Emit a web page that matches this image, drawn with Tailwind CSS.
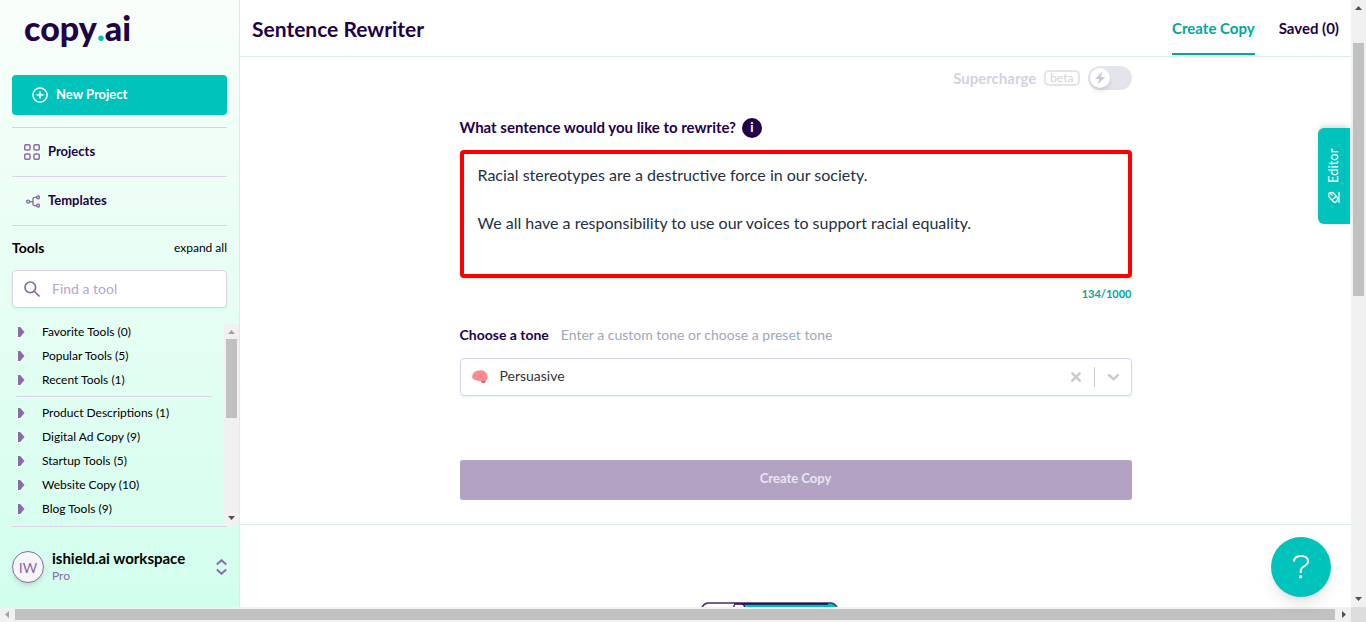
<!DOCTYPE html>
<html lang="en">
<head>
<meta charset="utf-8">
<title>Sentence Rewriter - copy.ai</title>
<script src="https://cdn.jsdelivr.net/npm/@tailwindcss/browser@4"></script>
</head>
<body class="flex h-screen flex-col overflow-hidden bg-white font-['Lato',sans-serif] text-[#220247]">
<svg class="hidden">
  <symbol id="tri" viewBox="0 0 7 10"><path d="M0 0h2.2l4.3 5-4.3 5H0z" fill="#8a6ba5"/></symbol>
</svg>

<div class="flex min-h-0 flex-1">
  <aside class="flex w-60 shrink-0 flex-col border-r border-[#d8eee4] bg-linear-to-b from-[#f9fefa] to-[#d2feee]">
    <a href="#" class="flex h-[75px] pt-2 pl-6 text-[34px] leading-10 font-black text-[#220247]">copy<span class="text-[#00c4bc]">.</span>ai</a>
    <div class="px-3">
      <button class="flex h-10 w-full items-center gap-2 rounded bg-[#00c4bc] pl-5 text-[13px] font-bold text-white">
        <svg class="size-4" viewBox="0 0 16 16" fill="none" stroke="currentColor" stroke-width="1.5"><circle cx="8" cy="8" r="7.1"/><path d="M8 4.4v7.2M4.4 8h7.2"/></svg>
        New Project
      </button>
      <nav class="mt-3 border-y border-[#ddd0e9] text-[13px] font-bold">
        <a href="#" class="flex h-12 items-center gap-2 pl-3">
          <svg class="size-4" viewBox="0 0 16 16" fill="none" stroke="#8a6ba5" stroke-width="1.5"><rect x=".7" y=".7" width="5.4" height="5.4" rx="1.6"/><rect x="9.9" y=".7" width="5.4" height="5.4" rx="1.6"/><rect x=".7" y="9.9" width="5.4" height="5.4" rx="1.6"/><rect x="9.9" y="9.9" width="5.4" height="5.4" rx="1.6"/></svg>
          Projects
        </a>
        <a href="#" class="flex h-[49px] items-center gap-2 border-t border-[#ddd0e9] pl-3">
          <svg class="size-4" viewBox="0 0 16 16" fill="none" stroke="#8a6ba5" stroke-width="1.4"><circle cx="4.200" cy="8.600" r="1.500"/><circle cx="14" cy="4.400" r="1.400"/><circle cx="14" cy="12.600" r="1.400"/><path d="M5.700 8.600H9M12.600 4.400h-2Q9 4.400 9 6v5q0 1.600 1.500 1.600h2.100"/></svg>
          Templates
        </a>
      </nav>
      <div class="flex h-11 items-center justify-between text-black">
        <h2 class="pb-0.5 text-[14px] font-bold">Tools</h2>
        <button class="text-[12px]">expand all</button>
      </div>
      <label class="flex h-[38px] items-center gap-3 rounded border border-[#ddd0e9] bg-white pl-[11px] shadow-sm shadow-[#00c4bc]/10">
        <svg class="size-4 shrink-0" viewBox="0 0 16 16" fill="none" stroke="#8a6ba5" stroke-width="1.7"><circle cx="6.3" cy="6.3" r="5.3"/><path d="m10 10 5.5 5.5"/></svg>
        <input type="text" aria-label="Find a tool" placeholder="Find a tool" class="w-full min-w-0 bg-transparent pb-0.5 text-[14px] outline-none placeholder:text-[#b9a6ca]">
      </label>
    </div>
    <div class="mt-4 flex min-h-0 flex-1 justify-between overflow-hidden">
      <div class="ml-4 flex w-[196px] flex-col gap-2 text-[12px] leading-4 text-black">
        <button class="flex items-center gap-[17px] pl-0.5"><svg class="h-2.5 w-[7px]"><use href="#tri"/></svg>Favorite Tools (0)</button>
        <button class="flex items-center gap-[17px] pl-0.5"><svg class="h-2.5 w-[7px]"><use href="#tri"/></svg>Popular Tools (5)</button>
        <button class="flex items-center gap-[17px] pl-0.5"><svg class="h-2.5 w-[7px]"><use href="#tri"/></svg>Recent Tools (1)</button>
        <hr class="border-[#ddd0e9]">
        <button class="flex items-center gap-[17px] pl-0.5"><svg class="h-2.5 w-[7px]"><use href="#tri"/></svg>Product Descriptions (1)</button>
        <button class="flex items-center gap-[17px] pl-0.5"><svg class="h-2.5 w-[7px]"><use href="#tri"/></svg>Digital Ad Copy (9)</button>
        <button class="flex items-center gap-[17px] pl-0.5"><svg class="h-2.5 w-[7px]"><use href="#tri"/></svg>Startup Tools (5)</button>
        <button class="flex items-center gap-[17px] pl-0.5"><svg class="h-2.5 w-[7px]"><use href="#tri"/></svg>Website Copy (10)</button>
        <button class="flex items-center gap-[17px] pl-0.5"><svg class="h-2.5 w-[7px]"><use href="#tri"/></svg>Blog Tools (9)</button>
      </div>
      <div class="flex w-[15px] flex-col items-center bg-[#f1f1f1]">
        <svg class="h-[15px] w-[15px]" viewBox="0 0 15 15"><path d="M4 10h7L7.500 6z" fill="#a3a3a3"/></svg>
        <div class="h-[79px] w-[11px] bg-[#c1c1c1]"></div>
        <svg class="mt-auto h-[15px] w-[15px]" viewBox="0 0 15 15"><path d="M4 5h7l-3.500 4z" fill="#505050"/></svg>
      </div>
    </div>
    <button class="mx-3 flex h-[81px] items-center gap-2 border-t border-[#ddd0e9] text-left">
      <span class="flex size-8 items-center justify-center rounded-full border border-[#8a6ba5] bg-[#f6f5f8] text-[14px] text-[#8a6ba5] shadow-md">IW</span>
      <span class="flex-1 pb-0.5"><span class="block text-[15px] leading-5 font-bold text-black">ishield.ai workspace</span><span class="block text-[12px] leading-4 text-[#8a6ba5]">Pro</span></span>
      <svg class="h-4 w-[11px]" viewBox="0 0 11 16" fill="none" stroke="#8a6ba5" stroke-width="1.900"><path d="M.8 5.500 5.500 1.200l4.700 4.300M.8 10.500l4.700 4.300 4.700-4.300"/></svg>
    </button>
  </aside>

  <div class="relative flex min-w-0 flex-1 flex-col">
    <header class="flex h-[57px] shrink-0 items-center justify-between border-b border-[#d8eee0] px-3">
      <h1 class="pt-0.5 text-[21px] font-bold">Sentence Rewriter</h1>
      <nav class="flex items-center gap-6 text-[15px] font-bold">
        <a href="#" class="mt-0.5 flex h-[51px] items-center border-b-2 border-[#00a79d] text-[#00a79d]">Create Copy</a>
        <a href="#">Saved (0)</a>
      </nav>
    </header>
    <main class="min-h-0 flex-1 overflow-hidden">
      <section class="h-[468px] border-b border-[#d8eee0] pt-[9px]">
        <div class="mx-auto max-w-2xl">
          <label class="flex h-6 items-center justify-end gap-2 text-[15px] font-bold text-[#d2d3db]">
            Supercharge
            <span class="flex h-4 items-center rounded-[5px] border-2 border-[#e4e4eb] px-1 text-[12px] font-normal">beta</span>
            <span class="relative flex">
              <input type="checkbox" class="h-6 w-11 appearance-none rounded-full bg-[#e4e4eb]">
              <span class="absolute top-0.5 left-0.5 flex size-5 items-center justify-center rounded-full bg-white shadow-md"><svg class="h-3.5 w-3" viewBox="0 0 12 14"><path d="M8.500.5 1 8h4.200L3.400 13.500 11.300 6H7z" fill="#c9c9ce"/></svg></span>
            </span>
          </label>
          <div class="mt-7 flex h-5 items-center gap-1.5">
            <label for="sentence" class="pb-0.5 text-[15px] font-bold">What sentence would you like to rewrite?</label>
            <button class="flex size-5 items-center justify-center rounded-full bg-[#220247] text-[13px] font-bold text-white">i</button>
          </div>
          <textarea id="sentence" class="mt-3 block h-32 w-full resize-none rounded border-4 border-[#ff0000] px-3.5 py-[9px] text-[16px] leading-6 text-[#252f3f] shadow-sm outline-none">Racial stereotypes are a destructive force in our society.

We all have a responsibility to use our voices to support racial equality.</textarea>
          <p class="mt-2 text-right text-[11px] leading-4 font-bold text-[#00a79d]">134/1000</p>
          <div class="mt-[22px] flex h-5 items-center gap-3">
            <label for="tone" class="text-[14px] font-bold">Choose a tone</label>
            <span class="text-[14px] text-[#9fa6b8]">Enter a custom tone or choose a preset tone</span>
          </div>
          <div class="relative mt-3.5">
            <select id="tone" class="block h-[38px] w-full appearance-none rounded border border-[#ddd0e9] bg-white pb-[3px] pl-[39px] text-[14px] text-[#333333] shadow-sm shadow-[#00c4bc]/10"><option>Persuasive</option></select>
            <svg class="pointer-events-none absolute top-3 left-3 h-3.5 w-4" viewBox="0 0 16 14"><path d="M.2 7.500C-.2 4.500 2 1.500 5 .8 7.500-.2 11-.1 13 1.700c2 1.200 3 4 2.600 6.200-.2 1.500-1 2.300-1.800 2.800-.2 1.200-1 2.200-2.300 2.400-1.200 0-1.900-.9-2.600-2.100-1.600.5-3 .2-4-.8C2.500 10 .6 9.500.2 7.500z" fill="#ff8d96"/><path d="M2 5.500c1.500-.8 2.500.5 3.500-.4M6 2c.2 1.600 1.700 1.800 3 1.300M11 2.200c-.6 1.500.4 2.200 2 2M7 6.500c1.500-1 2.300.8 4 0M3 8.500c1.500.6 2.600-.6 4 .3M9.500 9c1.300.6 2.500-.3 3.800-.3" fill="none" stroke="#ee7783" stroke-width=".6"/><path d="M9 11c1.500.3 3-.3 4.800-.3-.2 1.200-1 2.200-2.300 2.400-1.200 0-1.900-.9-2.500-2.100z" fill="#d95868"/></svg>
            <div class="absolute inset-y-0 right-3 flex items-center gap-3 text-[#cccccc]">
              <button aria-label="Clear"><svg class="size-3" viewBox="0 0 12 12" stroke="currentColor" stroke-width="2.600" stroke-linecap="round"><path d="m2.300 2.300 7.400 7.400M9.700 2.300 2.300 9.700"/></svg></button>
              <span class="h-5 w-px bg-[#cccccc]"></span>
              <svg class="h-3 w-[13px]" viewBox="0 0 13 12" fill="none" stroke="currentColor" stroke-width="2.500" stroke-linecap="round" stroke-linejoin="round"><path d="m2 4 4.500 4.300L11 4"/></svg>
            </div>
          </div>
          <button class="mt-16 h-10 w-full rounded-[3px] bg-[#b3a2c4] pb-0.5 text-[13px] font-bold text-[#ebe5f0]">Create Copy</button>
        </div>
      </section>
      <svg class="ml-[460px] mt-[77px] h-10 w-[138px]" viewBox="0 0 138 40"><path d="M44 1h86q6 1 7 8v31H44z" fill="#00c4bc"/><path d="M44 3H7Q2 3 1 9v31h44V9q0-5-3-6" fill="#fff"/><path d="M1 40V9q1-7 7-8h123q6 1 7 8v31" fill="none" stroke="#4a2a68" stroke-width="1.500"/><path d="M34 2h94" stroke="#220247" stroke-width="1.500"/><path d="M34 3v37M42 2q3 1 3 6v32" fill="none" stroke="#220247" stroke-width="1.300"/></svg>
    </main>
    <button class="absolute top-32 right-px flex h-24 w-8 rotate-180 items-center justify-center gap-2 rounded-r-md bg-[#00c4bc] text-[13px] text-white shadow-md [writing-mode:vertical-rl]">
      <svg class="size-3" viewBox="0 0 12 12" fill="none" stroke="currentColor" stroke-width="1.200"><path d="M1 0v11M3 2.500c0-1.500 2-2.500 3.500-1.200l4 4.200c1 1.200 1 3.500.2 4.500-1.200.8-3.200.8-4.400-.2L3.200 6.200C2.500 5 2 3.500 3 2.500zM4 6.500 8 3M7.500 7.500l3 2.500"/></svg>
      Editor
    </button>
    <button aria-label="Help" class="absolute right-5 bottom-2.5 flex size-[60px] items-center justify-center rounded-full bg-[#00c4bc] text-white shadow-lg">
      <svg class="h-6 w-4" viewBox="0 0 16 24" fill="none" stroke="currentColor" stroke-width="2"><path d="M1 6.500C1.200 3 4 1 8 1s7 2 7 5.300c0 3-2.300 4.200-4.500 5.400C8.500 12.800 7.600 14 7.600 18"/><circle cx="7.600" cy="21.800" r="1.700" fill="currentColor" stroke="none"/></svg>
    </button>
  </div>

  <div class="flex w-[15px] shrink-0 flex-col items-center bg-[#f1f1f1]">
    <svg class="h-[15px] w-[15px] shrink-0" viewBox="0 0 15 15"><path d="M4 10h7L7.500 6z" fill="#505050"/></svg>
    <div class="mt-7 h-[253px] w-[11px] bg-[#c1c1c1]"></div>
    <svg class="mt-auto h-[15px] w-[15px] shrink-0" viewBox="0 0 15 15"><path d="M4 5h7L7.500 9z" fill="#505050"/></svg>
  </div>
</div>
<div class="flex h-[15px] shrink-0 items-center bg-[#f1f1f1]">
  <svg class="h-[15px] w-[15px] shrink-0" viewBox="0 0 15 15"><path d="M9 4v7L5 7.500z" fill="#a3a3a3"/></svg>
  <div class="h-[11px] flex-1 bg-[#c1c1c1]"></div>
  <svg class="ml-px h-[15px] w-[15px] shrink-0" viewBox="0 0 15 15"><path d="M6 4v7l4-3.500z" fill="#505050"/></svg>
  <div class="h-[15px] w-[15px] bg-[#dcdcdc]"></div>
</div>
</body>
</html>
